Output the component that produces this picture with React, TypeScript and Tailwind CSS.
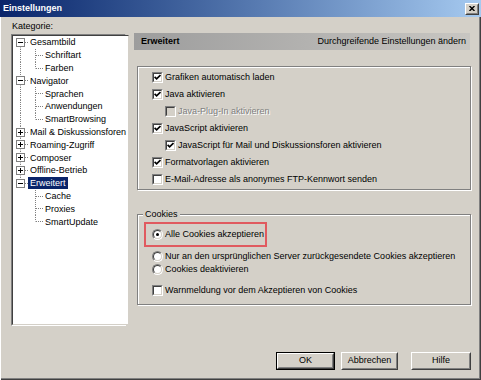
import React from "react"

type TreeNode = {
  label: string
  open: boolean
  selected?: boolean
  children?: string[]
}

const tree: TreeNode[] = [
  { label: "Gesamtbild", open: true, children: ["Schriftart", "Farben"] },
  { label: "Navigator", open: true, children: ["Sprachen", "Anwendungen", "SmartBrowsing"] },
  { label: "Mail & Diskussionsforen", open: false },
  { label: "Roaming-Zugriff", open: false },
  { label: "Composer", open: false },
  { label: "Offline-Betrieb", open: false },
  { label: "Erweitert", open: true, selected: true, children: ["Cache", "Proxies", "SmartUpdate"] },
]

const options = [
  { label: "Grafiken automatisch laden", checked: true },
  { label: "Java aktivieren", checked: true },
  { label: "Java-Plug-In aktivieren", checked: false, indent: true, disabled: true },
  { label: "JavaScript aktivieren", checked: true },
  { label: "JavaScript für Mail und Diskussionsforen aktivieren", checked: true, indent: true },
  { label: "Formatvorlagen aktivieren", checked: true },
  { label: "E-Mail-Adresse als anonymes FTP-Kennwort senden", checked: false },
]

const DOT = "1 1"
const LINE = "#808080"

function Check({ checked, disabled }: { checked: boolean; disabled?: boolean }) {
  return (
    <span className="flex h-[11px] w-[11px] shrink-0 border border-t-[#808080] border-l-[#808080] border-b-white border-r-white">
      <span
        className={`flex flex-1 items-center justify-center border border-t-[#404040] border-l-[#404040] border-b-[#d4d0c8] border-r-[#d4d0c8] ${
          disabled ? "bg-[#d4d0c8]" : "bg-white"
        }`}
      >
        {checked && (
          <svg width="7" height="7" viewBox="0 0 7 7">
            <path d="M0.6 2.9 L2.6 4.9 L6.5 1" fill="none" stroke="black" strokeWidth="1.7" />
          </svg>
        )}
      </span>
    </span>
  )
}

function Radio({ checked }: { checked: boolean }) {
  return (
    <span className="flex h-[11px] w-[11px] shrink-0 rounded-full border border-t-[#808080] border-l-[#808080] border-b-white border-r-white">
      <span className="flex flex-1 items-center justify-center rounded-full border border-t-[#404040] border-l-[#404040] border-b-[#d4d0c8] border-r-[#d4d0c8] bg-white">
        {checked && <span className="h-[3px] w-[3px] rounded-full bg-black" />}
      </span>
    </span>
  )
}

function Btn({ label, w, isDefault }: { label: string; w: string; isDefault?: boolean }) {
  return (
    <button className={`h-[18px] ${w} ${isDefault ? "border border-black" : ""}`}>
      <span className="flex h-full w-full border border-t-white border-l-white border-b-[#404040] border-r-[#404040]">
        <span className="flex flex-1 items-center justify-center border border-t-[#d4d0c8] border-l-[#d4d0c8] border-b-[#808080] border-r-[#808080]">
          {label}
        </span>
      </span>
    </button>
  )
}

function RootRow({ node, first, last }: { node: TreeNode; first: boolean; last: boolean }) {
  return (
    <div className="flex h-[12.8px] items-center">
      <svg width="15" height="12.8" className="shrink-0 overflow-visible">
        {!first && <line x1="7.5" y1="0" x2="7.5" y2="2.5" stroke={LINE} strokeDasharray={DOT} />}
        {!last && <line x1="7.5" y1="10.5" x2="7.5" y2="12.8" stroke={LINE} strokeDasharray={DOT} />}
        <line x1="12" y1="6.5" x2="15" y2="6.5" stroke={LINE} strokeDasharray={DOT} />
        <rect x="3.5" y="2.5" width="8" height="8" fill="white" stroke={LINE} />
        <line x1="5" y1="6.5" x2="10" y2="6.5" stroke="black" />
        {!node.open && <line x1="7.5" y1="4" x2="7.5" y2="9" stroke="black" />}
      </svg>
      <span
        className={`whitespace-nowrap px-[2px] leading-[12px] ${
          node.selected ? "bg-[#0a246a] text-white" : ""
        }`}
      >
        {node.label}
      </span>
    </div>
  )
}

function ChildRow({ label, parentLast, lastChild }: { label: string; parentLast: boolean; lastChild: boolean }) {
  return (
    <div className="flex h-[12.8px] items-center">
      <svg width="30" height="12.8" className="shrink-0 overflow-visible">
        {!parentLast && <line x1="7.5" y1="0" x2="7.5" y2="12.8" stroke={LINE} strokeDasharray={DOT} />}
        <line x1="22.5" y1="0" x2="22.5" y2={lastChild ? 6.5 : 12.8} stroke={LINE} strokeDasharray={DOT} />
        <line x1="23" y1="6.5" x2="30" y2="6.5" stroke={LINE} strokeDasharray={DOT} />
      </svg>
      <span className="whitespace-nowrap px-[2px] leading-[12px]">{label}</span>
    </div>
  )
}

export default function App() {
  return (
    <div className="flex h-[380px] w-[481px] flex-col bg-[#d4d0c8] font-['Liberation_Sans',Arial,sans-serif] text-[9px] text-black shadow-[inset_1px_0_0_#ffffff,inset_-1px_-1px_0_#404040,inset_-2px_-2px_0_#808080]">
      {/* Title bar */}
      <div className="flex h-[17px] items-center justify-between bg-linear-to-r from-[#0a246a] to-[#a6caf0] pl-[3px] pr-[2px]">
        <span className="font-bold text-white">Einstellungen</span>
        <span className="flex h-[12px] w-[14px] border border-t-white border-l-white border-b-[#404040] border-r-[#404040] bg-[#d4d0c8]">
          <span className="flex flex-1 items-center justify-center border border-t-[#d4d0c8] border-l-[#d4d0c8] border-b-[#808080] border-r-[#808080]">
            <svg width="6" height="5" viewBox="0 0 6 5">
              <path d="M0.5 0 L5.5 5 M5.5 0 L0.5 5" stroke="black" strokeWidth="1.4" />
            </svg>
          </span>
        </span>
      </div>

      <div className="flex gap-[8px] pl-[11px] pt-[4px]">
        {/* Category tree */}
        <div className="flex w-[115px] flex-col">
          <div className="h-[11px] pl-[1px] leading-[11px]">Kategorie:</div>
          <div className="mt-[2px] flex h-[292px] border border-t-[#808080] border-l-[#808080] border-b-white border-r-white">
            <div className="flex flex-1 flex-col border border-t-[#404040] border-l-[#404040] border-b-[#d4d0c8] border-r-[#d4d0c8] bg-white">
              {tree.map((node, i) => {
                const last = i === tree.length - 1
                return (
                  <React.Fragment key={node.label}>
                    <RootRow node={node} first={i === 0} last={last} />
                    {node.open &&
                      node.children?.map((c, j) => (
                        <ChildRow
                          key={c}
                          label={c}
                          parentLast={last}
                          lastChild={j === (node.children?.length ?? 0) - 1}
                        />
                      ))}
                  </React.Fragment>
                )
              })}
            </div>
          </div>
        </div>

        {/* Right panel */}
        <div className="flex w-[337px] flex-col pt-[12px]">
          <div className="mr-[1px] flex h-[17px] items-center justify-between bg-linear-to-r from-[#9d9d9d] to-[#c8c6c2] pl-[7px] pr-[4px]">
            <span className="font-bold">Erweitert</span>
            <span>Durchgreifende Einstellungen ändern</span>
          </div>

          <div className="ml-[3px] mt-[16px] border border-[#808080] pb-[1px] pl-[14px] pt-[2px] shadow-[inset_1px_1px_0_#ffffff,1px_1px_0_#ffffff]">
            {options.map(o => (
              <div
                key={o.label}
                className={`flex h-[17px] items-center gap-[2px] ${o.indent ? "pl-[13px]" : ""}`}
              >
                <Check checked={o.checked} disabled={o.disabled} />
                <span
                  className={`whitespace-nowrap ${
                    o.disabled ? "text-[#808080] [text-shadow:1px_1px_0_#ffffff]" : ""
                  }`}
                >
                  {o.label}
                </span>
              </div>
            ))}
          </div>

          <div className="relative ml-[3px] mt-[24px] border border-[#808080] pb-[7px] pl-[6px] shadow-[inset_1px_1px_0_#ffffff,1px_1px_0_#ffffff]">
            <span className="absolute left-[5px] top-[-7px] bg-[#d4d0c8] px-[2px] leading-[12px]">Cookies</span>
            <div className="mt-[7px] flex h-[25px] w-[123px] items-center gap-[2px] border-2 border-[#e05a5f] pl-[6px]">
              <Radio checked />
              <span className="whitespace-nowrap">Alle Cookies akzeptieren</span>
            </div>
            <div className="mt-[3px] flex h-[13px] items-center gap-[2px] pl-[8px]">
              <Radio checked={false} />
              <span className="whitespace-nowrap">
                Nur an den ursprünglichen Server zurückgesendete Cookies akzeptieren
              </span>
            </div>
            <div className="flex h-[13px] items-center gap-[2px] pl-[8px]">
              <Radio checked={false} />
              <span className="whitespace-nowrap">Cookies deaktivieren</span>
            </div>
            <div className="mt-[8px] flex h-[13px] items-center gap-[2px] pl-[8px]">
              <Check checked={false} />
              <span className="whitespace-nowrap">Warnmeldung vor dem Akzeptieren von Cookies</span>
            </div>
          </div>
        </div>
      </div>

      {/* Buttons */}
      <div className="mt-[26px] flex justify-end pr-[10px]">
        <Btn label="OK" w="w-[59px]" isDefault />
        <div className="w-[6px]" />
        <Btn label="Abbrechen" w="w-[57px]" />
        <div className="w-[13px]" />
        <Btn label="Hilfe" w="w-[60px]" />
      </div>
    </div>
  )
}
